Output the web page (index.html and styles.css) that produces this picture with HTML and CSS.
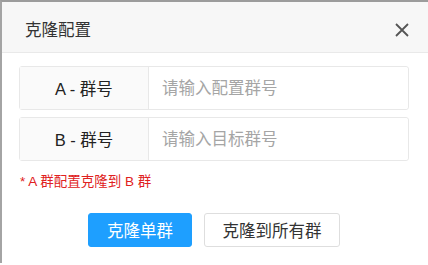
FILE: index.html
```html
<!DOCTYPE html>
<html lang="zh-CN">
<head>
    <meta charset="UTF-8">
    <meta name="viewport" content="width=device-width, initial-scale=1.0">
    <title>克隆配置</title>
    <link rel="stylesheet" href="styles.css">
</head>
<body>

<div class="dialog">
    <div class="dialog-header">
        <span class="dialog-title">克隆配置</span>
        <button class="close-button" aria-label="关闭">
            <svg width="14" height="14" viewBox="0 0 14 14">
                <path d="M1 1 L13 13 M13 1 L1 13" stroke="#555" stroke-width="1.8" fill="none"/>
            </svg>
        </button>
    </div>
    <div class="dialog-body">
        <div class="form-row">
            <label class="form-label" for="groupA">A - 群号</label>
            <input class="form-input" id="groupA" type="text" placeholder="请输入配置群号">
        </div>
        <div class="form-row">
            <label class="form-label" for="groupB">B - 群号</label>
            <input class="form-input" id="groupB" type="text" placeholder="请输入目标群号">
        </div>
        <div class="form-tip">* A 群配置克隆到 B 群</div>
        <div class="dialog-buttons">
            <button class="btn btn-primary">克隆单群</button>
            <button class="btn btn-default">克隆到所有群</button>
        </div>
    </div>
</div>

</body>
</html>
```

FILE: styles.css
```css
body {
    margin: 0;
    background-color: #fff;
    font-family: "Liberation Sans", "Noto Sans CJK SC", sans-serif;
    color: #333;
    overflow: hidden; /* no scrollbars */
}
.dialog {
    width: 426px;
    height: 261px;
    background-color: #fff;
    border-top: 2px solid #9c9c9c;
    border-left: 2px solid #a4a4a4;
}
.dialog-header {
    height: 50px;
    background-color: #f7f7f7;
    border-bottom: 1px solid #e9e9e9;
    display: flex;
    align-items: center;
    justify-content: space-between;
    padding: 0 19px 0 23px;
}
.dialog-title {
    font-size: 16.5px;
    color: #333;
    padding-top: 4px;
}
.close-button {
    background: none;
    border: none;
    padding: 0;
    width: 14px;
    height: 14px;
    margin-top: 5px;
    cursor: pointer;
    display: flex;
}
.dialog-body {
    padding: 13px 19px 0 17px;
}
.form-row {
    display: flex;
    height: 42px;
    border: 1px solid #e8e8e8;
    border-radius: 3px;
    margin-bottom: 7px;
}
.form-label {
    width: 128px;
    flex-shrink: 0;
    background-color: #fafafa;
    border-right: 1px solid #e8e8e8;
    display: flex;
    align-items: center;
    justify-content: center;
    font-size: 16.5px;
    color: #222;
}
.form-input {
    flex-grow: 1;
    min-width: 0;
    border: none;
    outline: none;
    padding: 0 13px;
    font-family: inherit;
    font-size: 16.5px;
    color: #333;
    background: #fff;
    border-radius: 0 3px 3px 0;
}
.form-input::placeholder {
    color: #a5a5a5;
}
.form-tip {
    margin-top: 11px;
    padding-left: 1px;
    font-size: 13.5px;
    line-height: 20px;
    color: #e02020;
}
.dialog-buttons {
    display: flex;
    justify-content: center;
    gap: 12px;
    margin-top: 21px;
}
.btn {
    height: 34px;
    border-radius: 3px;
    font-family: inherit;
    font-size: 16.5px;
    cursor: pointer;
    padding: 0;
}
.btn-primary {
    width: 104px;
    background-color: #1e9fff;
    border: 1px solid #1e9fff;
    color: #fff;
}
.btn-default {
    width: 136px;
    background-color: #fff;
    border: 1px solid #dedede;
    color: #333;
}
```
